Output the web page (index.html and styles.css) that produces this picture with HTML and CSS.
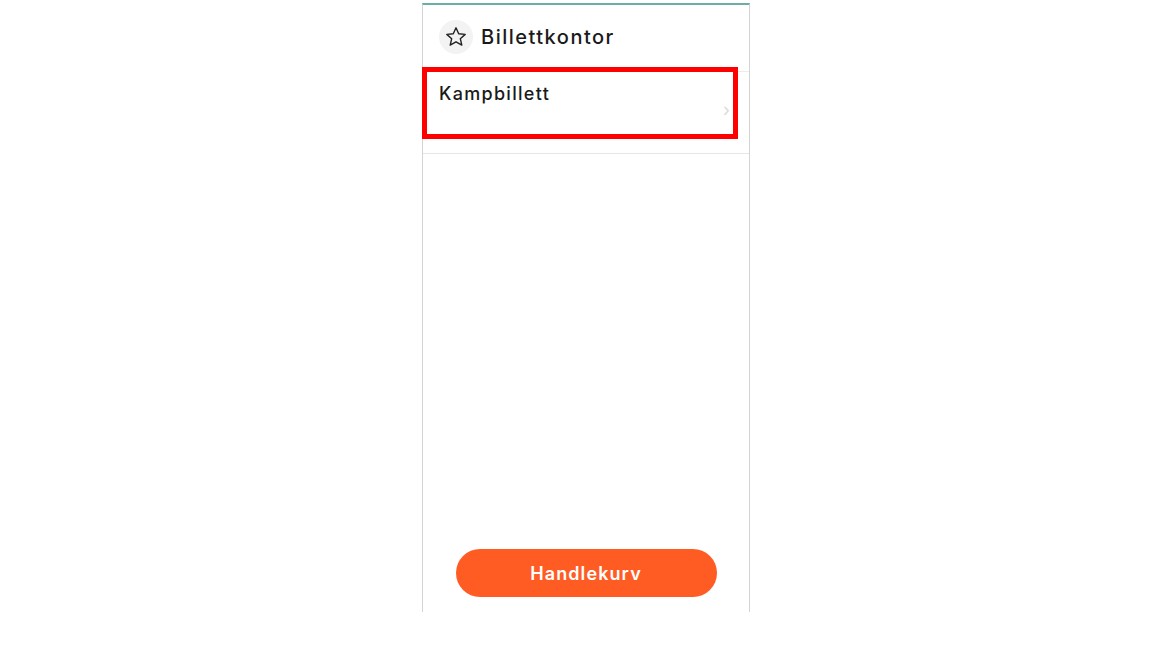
FILE: index.html
```html
<!DOCTYPE html>
<html lang="no">
<head>
<meta charset="utf-8">
<title>Billettkontor</title>
<link rel="stylesheet" href="styles.css">
</head>
<body>
<div class="panel">
  <header class="header">
    <span class="icon-circle">
      <svg width="24" height="24" viewBox="0 0 24 24" fill="none" stroke="#222" stroke-width="1.4" stroke-linejoin="round">
        <path d="M12 2.8l2.7 6 6.5.6-4.9 4.3 1.5 6.4L12 16.8l-5.8 3.3 1.5-6.4-4.9-4.3 6.5-.6z"/>
      </svg>
    </span>
    <span class="title">Billettkontor</span>
  </header>
  <div class="item">
    <span class="item-label">Kampbillett</span>
    <span class="chevron">›</span>
    <div class="highlight"></div>
  </div>
  <div class="spacer"></div>
  <div class="footer">
    <button class="cart">Handlekurv</button>
  </div>
</div>
</body>
</html>
```
FILE: styles.css
```css
html, body {
  margin: 0;
  padding: 0;
  background: #fff;
}
body {
  font-family: Inter, "Noto Sans", sans-serif;
  color: #1a1a1a;
}
.panel {
  box-sizing: border-box;
  width: 328px;
  height: 609px;
  margin: 3px 0 0 422px;
  border-top: 2px solid #6aaea6;
  border-left: 1px solid #d4d4d4;
  border-right: 1px solid #d4d4d4;
  display: flex;
  flex-direction: column;
}
.header {
  box-sizing: border-box;
  height: 67px;
  display: flex;
  align-items: center;
  padding: 0 0 2px 16px;
  gap: 8px;
  border-bottom: 1px solid #ececec;
}
.icon-circle {
  width: 34px;
  height: 34px;
  border-radius: 50%;
  background: #f3f3f3;
  display: flex;
  align-items: center;
  justify-content: center;
}
.title {
  font-size: 20px;
  font-weight: 500;
  letter-spacing: 1.5px;
}
.item {
  position: relative;
  box-sizing: border-box;
  height: 82px;
  padding: 11px 16px 0 16px;
  border-bottom: 1px solid #e6e6e6;
  display: flex;
  justify-content: space-between;
}
.item-label {
  font-size: 18px;
  font-weight: 500;
  letter-spacing: 1.3px;
}
.chevron {
  margin-top: 18px;
  margin-right: 3px;
  color: #dadada;
  font-size: 18px;
  line-height: 1;
}
.highlight {
  position: absolute;
  left: -1px;
  top: -5px;
  width: 316px;
  height: 72px;
  box-sizing: border-box;
  border: 5px solid #ff0000;
  pointer-events: none;
}
.spacer {
  flex: 1;
}
.footer {
  display: flex;
  justify-content: center;
  padding-bottom: 15px;
}
.cart {
  width: 261px;
  height: 48px;
  border: none;
  border-radius: 24px;
  background: #ff5c24;
  color: #fff;
  font-family: Inter, "Noto Sans", sans-serif;
  font-size: 18px;
  font-weight: 600;
  letter-spacing: 1.1px;
}
```
